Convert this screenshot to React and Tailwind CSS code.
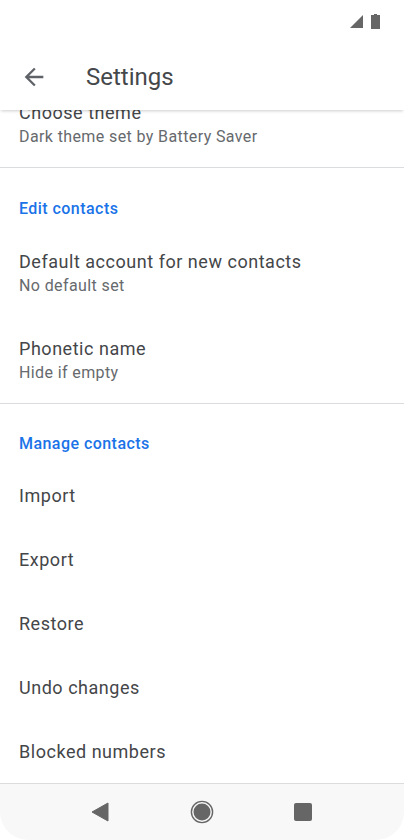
function Row({ title, sub }) {
  return (
    <div className="flex h-[86.5px] flex-col justify-center px-[19px] pt-[2px]">
      <p className="text-[18px] leading-[24px] tracking-[0.53px] text-[#444649]">{title}</p>
      <p className="text-[16px] leading-[24px] tracking-[0.39px] text-[#66696d]">{sub}</p>
    </div>
  );
}

function SingleRow({ title }) {
  return (
    <div className="flex h-[64px] items-center px-[19px] text-[18px] tracking-[0.53px] text-[#444649]">
      {title}
    </div>
  );
}

function SectionHead({ children }) {
  return (
    <div className="flex h-[59px] items-start px-[19px] pt-[28px] text-[16px] leading-[24px] font-medium tracking-[0.45px] text-[#1a73e8]">
      {children}
    </div>
  );
}

export default function App() {
  return (
    <div className="flex h-[840px] w-[404px] flex-col overflow-hidden bg-white font-['Roboto',sans-serif]">
      {/* Status bar */}
      <div className="flex h-[44px] shrink-0 items-center justify-end gap-[8px] pr-[24px] pb-[2px]">
        <svg width="13" height="14" viewBox="0 0 13 14">
          <path d="M0 14 L13 1 V14 Z" fill="#666666" />
        </svg>
        <svg width="9" height="15" viewBox="0 0 9 15">
          <path d="M3 0 H6 V1 H9 V15 H0 V1 H3 Z" fill="#666666" />
        </svg>
      </div>

      {/* Toolbar */}
      <div className="relative z-10 flex h-[66px] shrink-0 items-center bg-white shadow-[0_2px_3px_-1px_rgba(0,0,0,0.2)]">
        <svg viewBox="0 0 24 24" className="ml-[19.5px] size-[28px] fill-[#5f6368]">
          <path d="M20 11H7.83l5.59-5.59L12 4l-8 8 8 8 1.41-1.41L7.83 13H20v-2z" />
        </svg>
        <h1 className="ml-[38.5px] text-[24px] text-[#45484b]">Settings</h1>
      </div>

      {/* Scrolled list */}
      <div className="flex-1 overflow-hidden">
        <div className="-mt-[9px] px-[19px]">
          <p className="text-[18px] leading-[24px] tracking-[0.53px] text-[#444649]">Choose theme</p>
          <p className="text-[16px] leading-[24px] tracking-[0.39px] text-[#66696d]">Dark theme set by Battery Saver</p>
        </div>
        <div className="mt-[18px] mb-[1px] border-t border-[#dadce0]" />
        <SectionHead>Edit contacts</SectionHead>
        <div className="mt-[2px]">
          <Row title="Default account for new contacts" sub="No default set" />
          <Row title="Phonetic name" sub="Hide if empty" />
        </div>
        <div className="border-t border-[#dadce0]" />
        <SectionHead>Manage contacts</SectionHead>
        <SingleRow title="Import" />
        <SingleRow title="Export" />
        <SingleRow title="Restore" />
        <SingleRow title="Undo changes" />
        <SingleRow title="Blocked numbers" />
      </div>

      {/* Nav bar */}
      <div className="flex h-[57px] shrink-0 items-center gap-[80.5px] rounded-b-[28px] border-t border-[#dcdcdc] bg-[#f8f8f8] pb-[1px] pl-[91px]">
        <svg width="18" height="20" viewBox="0 0 18 20">
          <path d="M17 1 V19 L1 10 Z" fill="#666666" stroke="#666666" strokeWidth="1" strokeLinejoin="round" />
        </svg>
        <svg width="24" height="24" viewBox="0 0 24 24">
          <circle cx="12" cy="12" r="8.5" fill="#666666" />
          <circle cx="12" cy="12" r="10.6" fill="none" stroke="#666666" strokeWidth="1.4" />
        </svg>
        <div className="size-[18px] rounded-[2px] bg-[#666666]" />
      </div>
    </div>
  );
}
